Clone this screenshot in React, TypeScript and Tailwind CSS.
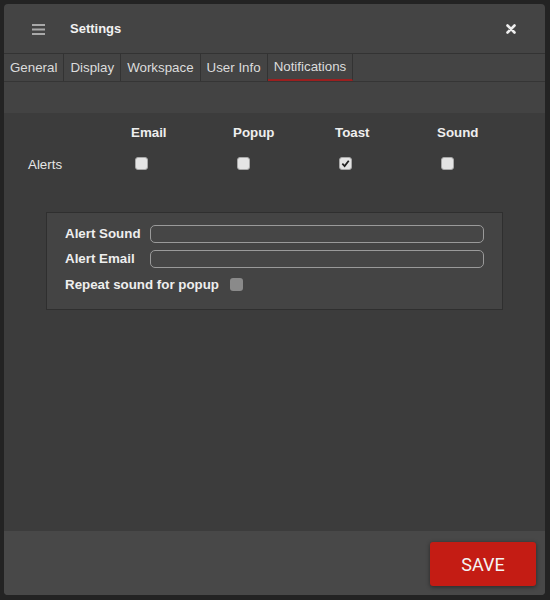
const tabs = ["General", "Display", "Workspace", "User Info", "Notifications"];
const channels = ["Email", "Popup", "Toast", "Sound"];

function Box({ checked }: { checked?: boolean }) {
    return (
        <span className="ml-1 flex h-[13px] w-[13px] items-center justify-center rounded-[3px] border border-[#a8a8a8] bg-[#e4e4e4]">
            {checked && (
                <svg width="9" height="9" viewBox="0 0 10 10">
                    <path d="M1.5 5.2 L4 7.8 L8.6 2" fill="none" stroke="#222" strokeWidth="2" />
                </svg>
            )}
        </span>
    );
}

function TextInput() {
    return <div className="h-[18px] rounded-[5px] border border-[#9a9a9a] bg-[#464646]" />;
}

export default function App() {
    return (
        <div className="h-[600px] w-[550px] bg-[#232323] p-1 font-['Liberation_Sans',Arial,sans-serif]">
            <div className="flex h-[591px] w-[541px] flex-col overflow-hidden rounded-[4px] bg-[#444]">
                {/* header */}
                <div className="flex h-[50px] shrink-0 items-center border-b border-[#333] pl-[28px] pr-[29px]">
                    <svg width="13" height="11" viewBox="0 0 13 11" className="mt-[1px]">
                        <rect x="0" y="0" width="13" height="2" fill="#a9a9a9" />
                        <rect x="0" y="4.5" width="13" height="2" fill="#a9a9a9" />
                        <rect x="0" y="9" width="13" height="2" fill="#a9a9a9" />
                    </svg>
                    <span className="ml-[25px] text-[13px] font-bold text-[#f2f2f2]">Settings</span>
                    <svg width="10" height="10" viewBox="0 0 10 10" className="ml-auto">
                        <path d="M1.5 1.5 L8.5 8.5 M8.5 1.5 L1.5 8.5" stroke="#eee" strokeWidth="2.6" strokeLinecap="round" />
                    </svg>
                </div>

                {/* tabs */}
                <div className="flex h-[28px] shrink-0 border-b border-[#353535]">
                    {tabs.map((t) => (
                        <div
                            key={t}
                            className={`flex items-center border-r border-[#333] px-[6px] text-[13.33px] text-[#dcdcdc] ${
                                t === "Notifications" ? "border-b-2 border-b-[#9b2020]" : ""
                            }`}
                        >
                            {t}
                        </div>
                    ))}
                </div>
                <div className="h-[31px] shrink-0 bg-[#434343]" />

                {/* content */}
                <div className="flex-1 bg-[#3c3c3c] pt-[10px] text-[13.33px]">
                    <div className="grid grid-cols-[103px_102px_102px_102px_102px] pl-[24px]">
                        <div />
                        {channels.map((c) => (
                            <div key={c} className="font-bold text-[#eee]">
                                {c}
                            </div>
                        ))}
                        <div className="mt-[12px] text-[#e6e6e6]">Alerts</div>
                        {channels.map((c) => (
                            <div key={c} className="mt-[14px] flex">
                                <Box checked={c === "Toast"} />
                            </div>
                        ))}
                    </div>

                    <div className="ml-[42px] mt-[37px] w-[457px] border border-[#2f2f2f] bg-[#444] px-[18px] pb-[14px] pt-[11px]">
                        <div className="grid grid-cols-[85px_1fr] items-center gap-y-[5px]">
                            <span className="font-bold text-[#eee]">Alert Sound</span>
                            <TextInput />
                            <span className="font-bold text-[#eee]">Alert Email</span>
                            <TextInput />
                        </div>
                        <div className="mt-[6px] flex items-center">
                            <span className="font-bold text-[#eee]">Repeat sound for popup</span>
                            <span className="ml-[11px] h-[13px] w-[13px] rounded-[3px] bg-[#8a8a8a]" />
                        </div>
                    </div>
                </div>

                {/* footer */}
                <div className="flex h-[64px] shrink-0 items-start justify-end bg-[#484848] pr-[9px] pt-[11px]">
                    <button className="flex h-[44px] w-[106px] items-center justify-center rounded-[3px] bg-[#c41c14] font-['Roboto',sans-serif] text-[18px] text-[#f4f4f4] shadow-[0_1px_4px_rgba(0,0,0,0.45)]">
                        SAVE
                    </button>
                </div>
            </div>
        </div>
    );
}
